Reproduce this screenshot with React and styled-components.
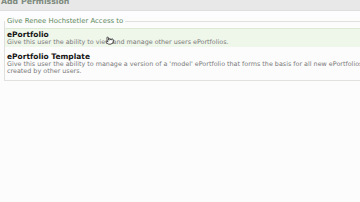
import React from "react";
import styled, { createGlobalStyle } from "styled-components";
import { Pointer } from "lucide-react";

const Global = createGlobalStyle`
  html, body { margin: 0; padding: 0; background: #fcfcfc; overflow: hidden; }
  body { width: 360px; height: 202px; font-family: "DejaVu Sans", "Liberation Sans", sans-serif; }
`;

const Page = styled.div`
  width: 360px;
  height: 202px;
  overflow: hidden;
  background: #fcfcfc;
`;

const Header = styled.div`
  height: 10px;
  background: #e8e8e9;
  border-bottom: 1px solid #dedede;
  padding-left: 1px;
  font-size: 7.8px;
  font-weight: bold;
  line-height: 4px;
  color: #7d8a7d;
  overflow: hidden;
  white-space: nowrap;
`;

const Band = styled.div`
  height: 6px;
  background: #fdfdff;
`;

const Fieldset = styled.fieldset`
  margin: 0 -20px 0 4px;
  padding: 3px 0 3.5px 0;
  border: 1px solid #e0e0dd;
  min-width: 0;
`;

const Legend = styled.legend`
  padding: 0 2px;
  margin: 0;
  font-size: 6.9px;
  line-height: 8px;
  color: #5f8a5f;
  white-space: nowrap;
`;

const Row = styled.div`
  position: relative;
  padding: 1.5px 0 1px 2px;
  margin-top: ${(p) => (p.$first ? "0" : "3px")};
  background: ${(p) => (p.$hover ? "#eff6ea" : "transparent")};
  border-top: 1px solid ${(p) => (p.$hover ? "#dce9d4" : "transparent")};
  cursor: pointer;
`;

const Title = styled.div`
  font-size: 7.5px;
  font-weight: bold;
  line-height: 8px;
  color: #151515;
  white-space: nowrap;
`;

const Desc = styled.div`
  font-size: 6.4px;
  line-height: 7.5px;
  color: #7a7a7a;
  white-space: nowrap;
`;

const Cursor = styled.span`
  position: absolute;
  left: 100px;
  top: 7px;
  display: flex;
  transform: rotate(-8deg);
`;

export default function App() {
  return (
    <Page>
      <Global />
      <Header>Add Permission</Header>
      <Band />
      <Fieldset>
        <Legend>Give Renee Hochstetler Access to</Legend>
        <Row $first $hover>
          <Title>ePortfolio</Title>
          <Desc>Give this user the ability to view and manage other users ePortfolios.</Desc>
          <Cursor>
            <Pointer size={9} strokeWidth={1.8} color="#111" fill="#fff" />
          </Cursor>
        </Row>
        <Row>
          <Title>ePortfolio Template</Title>
          <Desc>
            Give this user the ability to manage a version of a 'model' ePortfolio that forms the basis for all new ePortfolios
            <br />
            created by other users.
          </Desc>
        </Row>
      </Fieldset>
    </Page>
  );
}
